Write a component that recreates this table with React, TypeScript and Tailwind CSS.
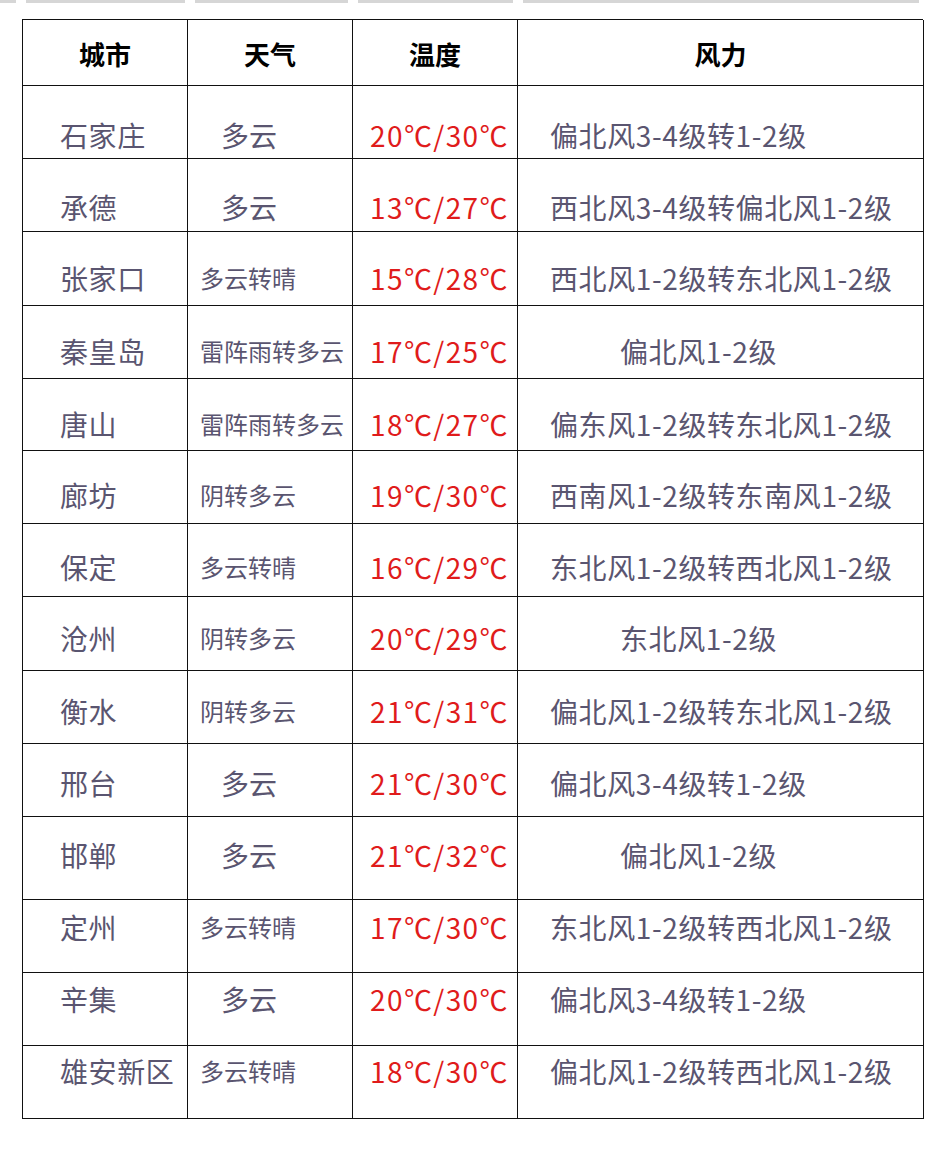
import React from 'react';

interface WeatherRow {
  city: string;
  weather: string;
  temp: string;
  wind: string;
  rowClass: string;
  padClass: string;
}

const rows: WeatherRow[] = [
  { city: '石家庄', weather: '多云', temp: '20℃/30℃', wind: '偏北风3-4级转1-2级', rowClass: 'h-[73px]', padClass: 'pt-[31px]' },
  { city: '承德', weather: '多云', temp: '13℃/27℃', wind: '西北风3-4级转偏北风1-2级', rowClass: 'h-[73px]', padClass: 'pt-[30px]' },
  { city: '张家口', weather: '多云转晴', temp: '15℃/28℃', wind: '西北风1-2级转东北风1-2级', rowClass: 'h-[74px]', padClass: 'pt-[28px]' },
  { city: '秦皇岛', weather: '雷阵雨转多云', temp: '17℃/25℃', wind: '偏北风1-2级', rowClass: 'h-[73px]', padClass: 'pt-[27px]' },
  { city: '唐山', weather: '雷阵雨转多云', temp: '18℃/27℃', wind: '偏东风1-2级转东北风1-2级', rowClass: 'h-[72px]', padClass: 'pt-[27px]' },
  { city: '廊坊', weather: '阴转多云', temp: '19℃/30℃', wind: '西南风1-2级转东南风1-2级', rowClass: 'h-[73px]', padClass: 'pt-[26px]' },
  { city: '保定', weather: '多云转晴', temp: '16℃/29℃', wind: '东北风1-2级转西北风1-2级', rowClass: 'h-[73px]', padClass: 'pt-[25px]' },
  { city: '沧州', weather: '阴转多云', temp: '20℃/29℃', wind: '东北风1-2级', rowClass: 'h-[74px]', padClass: 'pt-[23px]' },
  { city: '衡水', weather: '阴转多云', temp: '21℃/31℃', wind: '偏北风1-2级转东北风1-2级', rowClass: 'h-[73px]', padClass: 'pt-[22px]' },
  { city: '邢台', weather: '多云', temp: '21℃/30℃', wind: '偏北风3-4级转1-2级', rowClass: 'h-[73px]', padClass: 'pt-[21px]' },
  { city: '邯郸', weather: '多云', temp: '21℃/32℃', wind: '偏北风1-2级', rowClass: 'h-[83px]', padClass: 'pt-[20px]' },
  { city: '定州', weather: '多云转晴', temp: '17℃/30℃', wind: '东北风1-2级转西北风1-2级', rowClass: 'h-[73px]', padClass: 'pt-[9px]' },
  { city: '辛集', weather: '多云', temp: '20℃/30℃', wind: '偏北风3-4级转1-2级', rowClass: 'h-[73px]', padClass: 'pt-[8px]' },
  { city: '雄安新区', weather: '多云转晴', temp: '18℃/30℃', wind: '偏北风1-2级转西北风1-2级', rowClass: 'h-[73px]', padClass: 'pt-[7px]' },
];

const cellBase = 'border-r border-b border-[#111] leading-[36px]';

export default function App() {
  return (
    <div
      className="relative h-[1150px] w-[942px] overflow-hidden bg-white"
      style={{ fontFamily: '"Noto Sans CJK SC", "Noto Sans", sans-serif' }}
    >
      {/* faint strip left over from the page above */}
      <div className="flex h-[3px] gap-[10px]">
        <div className="w-[16px] bg-[#d6d6d6]" />
        <div className="w-[159px] bg-[#d6d6d6]" />
        <div className="w-[153px] bg-[#d6d6d6]" />
        <div className="w-[155px] bg-[#d6d6d6]" />
        <div className="w-[396px] bg-[#d6d6d6]" />
      </div>

      <div className="ml-[22px] mt-[16px] grid w-[901px] grid-cols-[165px_165px_165px_406px] border-t border-l border-[#111]">
        {['城市', '天气', '温度', '风力'].map((title) => (
          <div
            key={title}
            className={`${cellBase} flex h-[66px] items-start justify-center pt-[16px] text-[26px] font-bold text-black`}
          >
            {title}
          </div>
        ))}

        {rows.map((row) => {
          const shortWind = row.wind.length < 8;
          const shortWeather = row.weather.length <= 2;
          return (
            <React.Fragment key={row.city}>
              <div className={`${cellBase} ${row.rowClass} ${row.padClass} pl-[37px] text-[28px] tracking-[0.6px] text-[#5a5570]`}>
                {row.city}
              </div>
              <div
                className={`${cellBase} ${row.rowClass} ${row.padClass} text-[#5a5570] ${
                  shortWeather ? 'pl-[33px] text-[28px]' : 'pl-[12px] text-[24px]'
                }`}
              >
                {row.weather}
              </div>
              <div className={`${cellBase} ${row.rowClass} ${row.padClass} pl-[17px] text-[28px] tracking-[1.4px] text-[#e01b1b]`}>
                {row.temp}
              </div>
              <div
                className={`${cellBase} ${row.rowClass} ${row.padClass} text-[28px] tracking-[0.6px] text-[#5a5570] ${
                  shortWind ? 'pl-[102px]' : 'pl-[32px]'
                }`}
              >
                {row.wind}
              </div>
            </React.Fragment>
          );
        })}
      </div>
    </div>
  );
}
